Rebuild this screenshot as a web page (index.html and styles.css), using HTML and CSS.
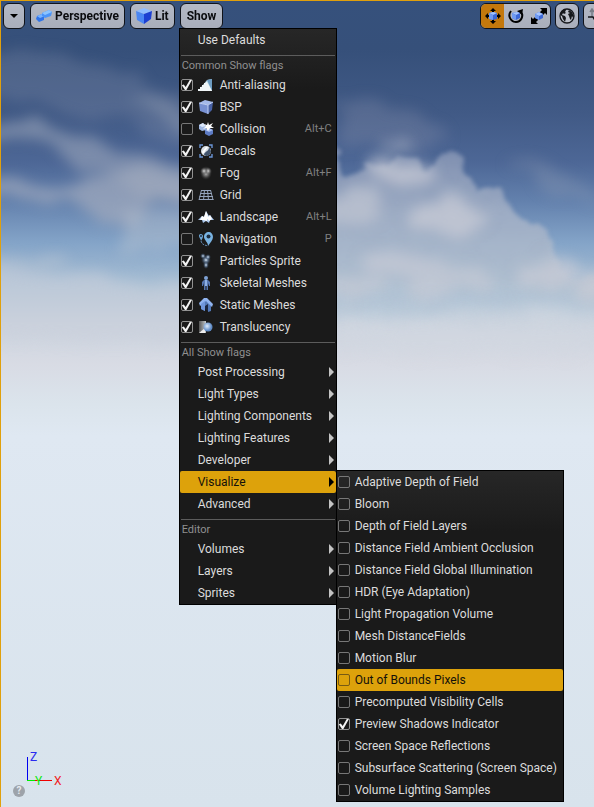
FILE: index.html
```html
<!DOCTYPE html>
<html lang="en">
<head>
<meta charset="utf-8">
<title>Viewport</title>
<link rel="stylesheet" href="styles.css">
</head>
<body>
<main class="viewport">
  <svg class="sky" viewBox="0 0 594 807" preserveAspectRatio="xMidYMid slice" aria-hidden="true">
    <defs>
      <linearGradient id="air" x1="0" y1="0" x2="0" y2="1">
        <stop offset="0" stop-color="#36517c"/>
        <stop offset=".06" stop-color="#36507a"/>
        <stop offset=".14" stop-color="#415a86"/>
        <stop offset=".2" stop-color="#4d6796"/>
        <stop offset=".25" stop-color="#6482ae"/>
        <stop offset=".3" stop-color="#84a4c8"/>
        <stop offset=".36" stop-color="#adc3d6"/>
        <stop offset=".4" stop-color="#cbd4df"/>
        <stop offset=".45" stop-color="#d8dbe4"/>
        <stop offset=".5" stop-color="#dbe4ec"/>
        <stop offset=".54" stop-color="#dfe8f2"/>
        <stop offset="1" stop-color="#d8e3ec"/>
      </linearGradient>
      <linearGradient id="bank" gradientUnits="userSpaceOnUse" x1="0" y1="150" x2="0" y2="330">
        <stop offset="0" stop-color="#7f8fb0"/>
        <stop offset=".35" stop-color="#9dacc4"/>
        <stop offset=".75" stop-color="#b0c0d1"/>
        <stop offset="1" stop-color="#b5c7d8" stop-opacity="0"/>
      </linearGradient>
      <filter id="soft" x="-30%" y="-60%" width="160%" height="220%" color-interpolation-filters="sRGB">
        <feTurbulence type="fractalNoise" baseFrequency=".018 .03" numOctaves="4" seed="4" result="n"/>
        <feDisplacementMap in="SourceGraphic" in2="n" scale="36" xChannelSelector="R" yChannelSelector="G" result="d"/>
        <feGaussianBlur in="d" stdDeviation="7"/>
      </filter>
      <filter id="edge" x="-10%" y="-20%" width="120%" height="140%" color-interpolation-filters="sRGB">
        <feTurbulence type="fractalNoise" baseFrequency=".06" numOctaves="4" seed="9" result="n"/>
        <feDisplacementMap in="SourceGraphic" in2="n" scale="14" xChannelSelector="R" yChannelSelector="G" result="d"/>
        <feGaussianBlur in="d" stdDeviation="2"/>
      </filter>
    </defs>
    <rect width="594" height="807" fill="url(#air)"/>
    <g filter="url(#soft)" fill="#a3abbd">
      <path opacity=".2" d="M-20 50L80 55L190 100L190 150L110 120L-20 95Z"/>
      <path opacity=".55" d="M-20 118L40 122L90 130L150 158L190 165L190 205L130 190L60 160L25 150L-20 135Z"/>
      <path opacity=".7" d="M-20 178L50 180L100 182L125 170L200 176L200 208L150 198L135 226L95 225L70 205L-20 192Z"/>
      <path opacity=".4" fill="#c1c8d2" d="M110 205L200 215L200 250L130 240Z"/>
      <path opacity=".35" d="M130 100L160 95L200 125L200 150Z"/>
      <path opacity=".6" fill="#bdc6d3" d="M-20 250L60 252L70 264L-20 270Z"/>
      <path opacity=".6" fill="#c9cfda" d="M-20 266L60 276L150 288L200 278L200 340L-20 340Z"/>
      <path opacity=".3" fill="#8a91ab" d="M330 100L430 108L450 138L410 150L340 142Z"/>
      <path opacity=".25" d="M500 165L560 168L594 195L594 210L540 190Z"/>
    </g>
    <path filter="url(#edge)" fill="url(#bank)" d="M320 140L338 148L342 172L355 170L368 165L384 163L402 155L420 158L428 169L438 156L448 150L461 154L467 174L472 184L478 190L490 186L502 187L512 204L518 218L530 224L541 222L551 240L557 258L562 270L576 280L590 274L620 268L620 340L320 340Z"/>
    <g filter="url(#soft)" fill="#c8cbd5">
      <ellipse cx="400" cy="174" rx="30" ry="14" opacity=".75"/>
      <ellipse cx="448" cy="216" rx="44" ry="18" opacity=".75"/>
      <ellipse cx="350" cy="208" rx="35" ry="12" opacity=".6"/>
      <ellipse cx="405" cy="262" rx="46" ry="12" opacity=".7"/>
      <ellipse cx="452" cy="283" rx="52" ry="11" opacity=".65"/>
      <ellipse cx="547" cy="274" rx="28" ry="14" opacity=".75"/>
      <ellipse cx="350" cy="288" rx="32" ry="10" opacity=".65"/>
      <ellipse cx="596" cy="286" rx="18" ry="16" opacity=".8"/>
      <ellipse cx="550" cy="314" rx="26" ry="10" opacity=".6" fill="#d2d8e1"/>
      <ellipse cx="398" cy="144" rx="13" ry="6" opacity=".5"/>
      <path opacity=".45" fill="#d2d8e1" d="M330 318L610 314L610 350L330 350Z"/>
    </g>
  </svg>

  <header class="toolbar">
    <div class="group">
      <button class="tool narrow" aria-label="Viewport options">
        <svg width="8" height="4" viewBox="0 0 8 4"><path d="M0 0H8L4 4Z"/></svg>
      </button>
      <button class="tool">
        <svg width="16" height="16" viewBox="0 0 16 16">
          <path d="M1 8L6 6L8 8L8 12L3 14L0 11Z" fill="#2f73e8"/><path d="M1 8L6 6L9 8L4 10Z" fill="#79b4ff"/>
          <path d="M6 5L13 2L16 4L15 8L9 10L6 8Z" fill="#4b94f8"/><path d="M6 5L13 2L16 4L9 7Z" fill="#8cc4ff"/>
        </svg>
        Perspective
      </button>
      <button class="tool">
        <svg width="16" height="16" viewBox="0 0 16 16">
          <path d="M0 3L8 0L16 3L8 6Z" fill="#8fbcff"/><path d="M0 3L8 6V16L1 12Z" fill="#4b86f2"/><path d="M16 3L8 6V16L15 11Z" fill="#1c3fd2"/>
        </svg>
        Lit
      </button>
      <div class="anchor">
        <button class="tool text-only" aria-haspopup="menu" aria-expanded="true">Show</button>

        <div class="menu main-menu">
          <button class="item">Use Defaults</button>
          <h2 class="heading">Common Show flags</h2>
          <label class="item flag"><input type="checkbox" checked>
            <svg class="icon" viewBox="0 0 16 16"><path d="M1 13L9 3L14 2V14H1Z" fill="#b9d8e6"/><path d="M9 3L14 2V14Z" fill="#6d9cc2"/><path d="M0 14V12H2V10H4V8H6V6H8V5H9L14 14Z" fill="#f0f6f8"/></svg>
            Anti-aliasing</label>
          <label class="item flag"><input type="checkbox" checked>
            <svg class="icon" viewBox="0 0 16 16"><path d="M1 4L7 1L15 3L10 6Z" fill="#a3b9ea"/><path d="M1 4L10 6V15L2 12Z" fill="#7891d2"/><path d="M15 3L10 6V15L14 11Z" fill="#4862a6"/><path d="M1 4L10 6L15 3M10 6V15" fill="none" stroke="#c0d0f4"/></svg>
            BSP</label>
          <label class="item flag"><input type="checkbox">
            <svg class="icon" viewBox="0 0 16 16"><path d="M1 4L5 2L8 5V9L4 10L1 8Z" fill="#9fb8e4"/><path d="M1 4L5 2L8 5L4 6Z" fill="#dce8fb"/><path d="M7 9L11 7L15 9V13L11 15L7 13Z" fill="#5d7bc4"/><path d="M7 9L11 7L15 9L11 11Z" fill="#a5bdf0"/><path d="M10 1L11 4L15 2L13 5L16 7L12 7L10 10L8 7L5 8L8 5L6 3L9 4Z" fill="#fff"/></svg>
            Collision<kbd>Alt+C</kbd></label>
          <label class="item flag"><input type="checkbox" checked>
            <svg class="icon" viewBox="0 0 16 16"><path d="M2 5V2H5M11 2H14V5M14 11V14H11M5 14H2V11" fill="none" stroke="#6b95d6" stroke-width="1.4"/><circle cx="8" cy="8" r="5" fill="#d7dee5"/><path d="M8 13C10 13 13 11 13 8C12 6 12 5 11 4C11 8 8 8 7 10C5 11 6 12 8 13Z" fill="#42546d"/><path d="M4 9L8 4L10 4L5 11Z" fill="#fff"/></svg>
            Decals</label>
          <label class="item flag"><input type="checkbox" checked>
            <svg class="icon" viewBox="0 0 16 16"><defs><radialGradient id="mist"><stop offset="0" stop-color="#d8d8d8"/><stop offset=".5" stop-color="#777" stop-opacity=".7"/><stop offset="1" stop-color="#333" stop-opacity="0"/></radialGradient></defs><ellipse cx="8" cy="8" rx="6" ry="7" fill="url(#mist)"/><circle cx="10" cy="6" r="4" fill="url(#mist)"/><circle cx="6" cy="6" r="4" fill="url(#mist)"/></svg>
            Fog<kbd>Alt+F</kbd></label>
          <label class="item flag"><input type="checkbox" checked>
            <svg class="icon" viewBox="0 0 16 16" fill="none" stroke="#94a3bb"><path d="M3 3.500H13M2.500 6.500H14M1.500 9.500H15M1 12.500H15.500M3.500 3L1 13M6.500 3L5.500 13M9.500 3L10.500 13M12.500 3L15 13"/></svg>
            Grid</label>
          <label class="item flag"><input type="checkbox" checked>
            <svg class="icon" viewBox="0 0 16 16"><path d="M0 11L4 7L6 8L8 2L11 7L12 6L16 11L12 11L11 14L8 12L5 14L4 11Z" fill="#a9c6ec"/><path d="M8 2L10 7L9 12L5 11L2 11L4 7L6 8ZM12 6L14 10L11 12L9 9Z" fill="#fff"/></svg>
            Landscape<kbd>Alt+L</kbd></label>
          <label class="item flag"><input type="checkbox">
            <svg class="icon" viewBox="0 0 16 16"><path d="M11 1C8 1 6 3 6 6C6 9 10 11 10 15C12 12 15 9 15 6C15 3 13 1 11 1Z" fill="#79b3e2"/><circle cx="10.500" cy="5.500" r="2" fill="#1b2c40"/><path d="M3 3C1 3 1 4 1 5C1 7 3 8 3 10C4 8 5 7 5 5C5 4 4 3 3 3Z" fill="#6da3d2"/><circle cx="3" cy="5" r="1" fill="#1b2c40"/><path d="M3 10C4 14 7 14 10 15" fill="none" stroke="#658fb7" stroke-dasharray="2 1"/></svg>
            Navigation<kbd>P</kbd></label>
          <label class="item flag"><input type="checkbox" checked>
            <svg class="icon" viewBox="0 0 16 16"><defs><radialGradient id="spark"><stop offset="0" stop-color="#e3effa"/><stop offset=".4" stop-color="#7893b4" stop-opacity=".7"/><stop offset="1" stop-color="#293b52" stop-opacity="0"/></radialGradient></defs><circle cx="8" cy="7" r="5" fill="url(#spark)"/><circle cx="5" cy="3" r="3" fill="url(#spark)"/><circle cx="10" cy="4" r="3" fill="url(#spark)"/><ellipse cx="8" cy="12" rx="3" ry="4" fill="url(#spark)"/></svg>
            Particles Sprite</label>
          <label class="item flag"><input type="checkbox" checked>
            <svg class="icon" viewBox="0 0 16 16"><circle cx="8" cy="3" r="2" fill="#7fa2d6"/><path d="M6 5H10L12 7V11H11L10 8V15H8.500V11H7.500V15H6V8L5 11H4V7Z" fill="#5676b0"/><path d="M7 5H9V11H7Z" fill="#8eb0e4"/></svg>
            Skeletal Meshes</label>
          <label class="item flag"><input type="checkbox" checked>
            <svg class="icon" viewBox="0 0 16 16"><path d="M3 7L8 3L13 7V14L10 15V9H7V14L3 12Z" fill="#5278b6"/><path d="M6 1H9L15 7L14 10L8 4L2 9L1 6Z" fill="#90b4f0"/><path d="M3 7L7 4V14L3 12Z" fill="#6f96da"/><path d="M7 9L10 7V14L7 12Z" fill="#1a2640"/></svg>
            Static Meshes</label>
          <label class="item flag"><input type="checkbox" checked>
            <svg class="icon" viewBox="0 0 16 16"><defs><linearGradient id="pane"><stop offset="0" stop-color="#555"/><stop offset="1" stop-color="#c5c9ca"/></linearGradient><radialGradient id="ball" cx=".4" cy=".4"><stop offset="0" stop-color="#e1edfa"/><stop offset="1" stop-color="#5f8bc6"/></radialGradient></defs><path d="M1 2H8V14H1Z" fill="url(#pane)"/><path d="M1 14L7 9V14Z" fill="#eee"/><circle cx="10" cy="8" r="4.500" fill="url(#ball)"/></svg>
            Translucency</label>

          <h2 class="heading">All Show flags</h2>
          <button class="item more">Post Processing</button>
          <button class="item more">Light Types</button>
          <button class="item more">Lighting Components</button>
          <button class="item more">Lighting Features</button>
          <button class="item more">Developer</button>
          <div class="anchor">
            <button class="item more active" aria-haspopup="menu" aria-expanded="true">Visualize</button>
            <div class="menu sub-menu">
              <label class="item flag"><input type="checkbox">Adaptive Depth of Field</label>
              <label class="item flag"><input type="checkbox">Bloom</label>
              <label class="item flag"><input type="checkbox">Depth of Field Layers</label>
              <label class="item flag"><input type="checkbox">Distance Field Ambient Occlusion</label>
              <label class="item flag"><input type="checkbox">Distance Field Global Illumination</label>
              <label class="item flag"><input type="checkbox">HDR (Eye Adaptation)</label>
              <label class="item flag"><input type="checkbox">Light Propagation Volume</label>
              <label class="item flag"><input type="checkbox">Mesh DistanceFields</label>
              <label class="item flag"><input type="checkbox">Motion Blur</label>
              <label class="item flag active"><input type="checkbox">Out of Bounds Pixels</label>
              <label class="item flag"><input type="checkbox">Precomputed Visibility Cells</label>
              <label class="item flag"><input type="checkbox" checked>Preview Shadows Indicator</label>
              <label class="item flag"><input type="checkbox">Screen Space Reflections</label>
              <label class="item flag"><input type="checkbox">Subsurface Scattering (Screen Space)</label>
              <label class="item flag"><input type="checkbox">Volume Lighting Samples</label>
            </div>
          </div>
          <button class="item more">Advanced</button>

          <h2 class="heading">Editor</h2>
          <button class="item more">Volumes</button>
          <button class="item more">Layers</button>
          <button class="item more">Sprites</button>
        </div>
      </div>
    </div>

    <div class="group right">
      <div class="segments">
        <button class="segment on" aria-label="Move">
          <svg width="16" height="16" viewBox="0 0 16 16"><path d="M8 0L11 3H9V13H11L8 16L5 13H7V3H5ZM0 8L3 5V7H13V5L16 8L13 11V9H3V11Z"/><path d="M4 5L8 4L12 5V11L8 12L4 11Z" fill="#3c68d8"/><path d="M4 5L8 4L12 5L8 7Z" fill="#a4c4ff"/><path d="M4 5L8 7V12L4 11Z" fill="#6f9af2"/></svg>
        </button>
        <button class="segment" aria-label="Rotate">
          <svg width="16" height="16" viewBox="0 0 16 16"><path d="M3 3C-1 8 3 14 8 14C13 14 16 8 13 4" fill="none" stroke="#000" stroke-width="2"/><path d="M9 3L15 1L14 7Z"/><path d="M4 5L9 4L12 5V10L8 12L4 10Z" fill="#3c68d8"/><path d="M4 5L9 4L12 5L8 7Z" fill="#a4c4ff"/><path d="M4 5L8 7V12L4 10Z" fill="#6f9af2"/></svg>
        </button>
        <button class="segment" aria-label="Scale">
          <svg width="16" height="16" viewBox="0 0 16 16"><path d="M16 0V7L14 5L11 8L8 5L11 2L9 0ZM0 16V9L2 11L5 8L8 11L5 14L7 16Z"/><path d="M4 6L8 4L12 6V10L8 12L4 10Z" fill="#3c68d8"/><path d="M4 6L8 4L12 6L8 8Z" fill="#a4c4ff"/><path d="M4 6L8 8V12L4 10Z" fill="#6f9af2"/></svg>
        </button>
      </div>
      <button class="tool narrow" aria-label="World space">
        <svg width="16" height="16" viewBox="0 0 16 16"><circle cx="8" cy="8" r="7" fill="#bcc0ca" stroke="#15171b" stroke-width="1.300"/><path d="M2 4L5 1L7 2L6 4L7 5L5 6L4 5L3 7L6 8L7 10L6 14L4 11L3 8L1 7ZM10 2L13 4L15 8L14 10L13 8L12 12L11 11L10 8L9 6L11 5L9 4Z" fill="#15171b"/></svg>
      </button>
      <button class="tool narrow" aria-label="Surface snapping">
        <svg width="16" height="16" viewBox="0 0 16 16" fill="none"><path d="M5 9V1M3 4L5 1L7 4" stroke="#777c86" stroke-width="1.500"/><path d="M1 9H6L9 14H15" stroke="#15171b" stroke-width="1.500"/></svg>
      </button>
    </div>
  </header>

  <footer class="corner">
    <svg class="axes" width="52" height="35" viewBox="0 0 52 35" role="img" aria-label="Axis orientation">
      <path d="M14.500 7V30" stroke="#0000f0"/>
      <path d="M14 30.500H39" stroke="#f00000"/>
      <path d="M14 30.500H22" stroke="#00f000"/>
      <text x="17" y="11" fill="#2a2af0">Z</text>
      <text x="22" y="35" fill="#10e810">Y</text>
      <text x="41" y="35" fill="#f02020">X</text>
    </svg>
    <button class="help" aria-label="Help">?</button>
  </footer>
</main>
</body>
</html>
```
FILE: styles.css
```css
* {
  box-sizing: border-box;
}

body {
  margin: 0;
  font: 12px/16px Roboto, "Liberation Sans", sans-serif;
}

button {
  font: inherit;
  color: inherit;
  border: 0;
  padding: 0;
  background: none;
}

svg {
  flex: none;
}

.viewport {
  position: relative;
  display: flex;
  flex-direction: column;
  justify-content: space-between;
  min-height: 100vh;
  overflow: hidden;
  border: solid #e0a00c;
  border-width: 1px 0 0 1px;
}

.sky {
  position: absolute;
  inset: 0;
  width: 100%;
  height: 100%;
}

.toolbar {
  position: relative;
  z-index: 1;
  display: flex;
  justify-content: space-between;
  padding: 2px 0 0 2px;
}

.group {
  display: flex;
  gap: 5px;
}

.right {
  gap: 4px;
  margin-right: -13px;
}

.anchor {
  position: relative;
}

.tool,
.segments {
  display: flex;
  align-items: center;
  height: 26px;
  border: 1px solid #10131a;
  border-radius: 6px;
  background: linear-gradient(#b4b9c5, #a9aebb);
  color: #0a0b0e;
  font-weight: 700;
}

.tool {
  justify-content: center;
  gap: 3px;
  padding: 0 5px;
}

.text-only {
  padding: 0 6px;
}

.narrow {
  width: 22px;
  padding: 0;
}

.right .narrow {
  width: 24px;
}

.segments {
  overflow: hidden;
}

.segment {
  display: flex;
  align-items: center;
  justify-content: center;
  width: 23px;
  height: 100%;
}

.segment.on {
  background: #c4780c;
}

.menu {
  position: absolute;
  border: 1px solid #000;
  background: linear-gradient(#272727, #1a1a1a 60px);
  color: #dcdcdc;
}

.main-menu {
  top: 25px;
  left: -1px;
  width: 158px;
}

.sub-menu {
  top: -1px;
  left: 100%;
  width: 228px;
}

.item {
  display: flex;
  align-items: center;
  width: 100%;
  height: 22px;
  padding: 0 4px 0 18px;
  white-space: nowrap;
  text-align: left;
}

.flag {
  padding-left: 1px;
}

.active {
  border-radius: 2px;
  background: #dda20b;
  color: #14110a;
}

.heading {
  margin: 4px 1px 0;
  border-top: 1px solid #5c5c5c;
  padding: 2px 0 0 1px;
  color: #909090;
  font-size: 11px;
  font-weight: 400;
  line-height: 16px;
}

.flag input {
  appearance: none;
  flex: none;
  width: 12px;
  height: 12px;
  margin: 0 5px 0 0;
  border: 1px solid #777;
  border-radius: 2px;
}

.flag input:checked {
  position: relative;
  border-color: #929292;
}

.flag input:checked::after {
  content: "";
  position: absolute;
  inset: -1px;
  background: #f4f4f4;
  clip-path: polygon(10% 52%, 26% 46%, 42% 66%, 76% 8%, 94% 8%, 48% 92%, 36% 92%);
}

.active input {
  border-color: #765a14;
}

.icon {
  width: 16px;
  height: 16px;
  margin-right: 6px;
}

.flag kbd {
  margin-left: auto;
  color: #808080;
  font: inherit;
  font-size: 11px;
}

.more {
  justify-content: space-between;
  padding-right: 2px;
}

.more::after {
  content: "";
  border: solid transparent;
  border-width: 5px 0 5px 5px;
  border-left-color: #c4c4c4;
}

.more.active::after {
  border-left-color: #000;
}

.corner {
  position: relative;
  display: flex;
  flex-direction: column;
  align-items: flex-start;
  padding: 0 0 10px 12px;
}

.axes {
  overflow: visible;
  font-size: 12px;
}

.help {
  width: 12px;
  height: 12px;
  border-radius: 50%;
  background: #9da3aa;
  color: #e6eaee;
  font-size: 10px;
  font-weight: 700;
  line-height: 12px;
}
```
